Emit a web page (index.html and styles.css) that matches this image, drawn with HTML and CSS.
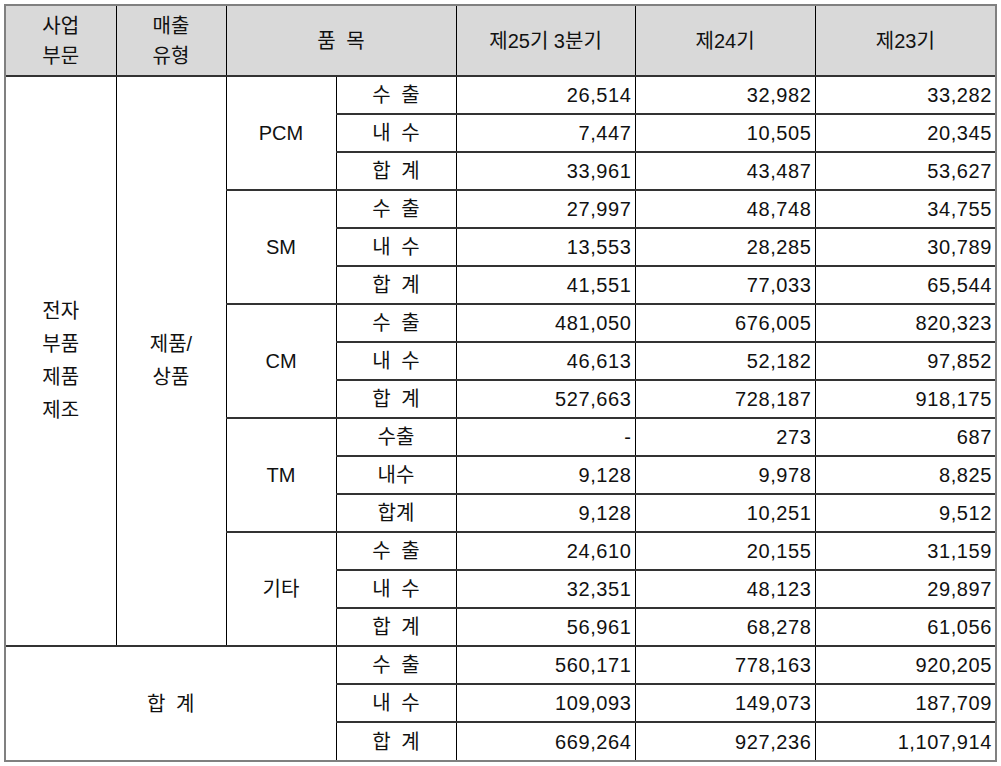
FILE: index.html
```html
<!DOCTYPE html>
<html lang="ko">
<head>
<meta charset="utf-8">
<link rel="stylesheet" href="styles.css">
</head>
<body>
<div class="frame">
<table class="sales">
<colgroup>
<col class="c1"><col class="c2"><col class="c3"><col class="c4"><col class="c5"><col class="c6"><col class="c7">
</colgroup>
<thead>
<tr class="head">
<th class="first">사업<br>부문</th>
<th>매출<br>유형</th>
<th colspan="2" class="sp">품 목</th>
<th>제25기 3분기</th>
<th>제24기</th>
<th>제23기</th>
</tr>
</thead>
<tbody>
<tr><td rowspan="15" class="first tall">전자<br>부품<br>제품<br>제조</td><td rowspan="15" class="tall">제품/<br>상품</td><td rowspan="3">PCM</td><td class="k">수 출</td><td class="n">26,514</td><td class="n">32,982</td><td class="n">33,282</td></tr>
<tr><td class="k">내 수</td><td class="n">7,447</td><td class="n">10,505</td><td class="n">20,345</td></tr>
<tr><td class="k">합 계</td><td class="n">33,961</td><td class="n">43,487</td><td class="n">53,627</td></tr>
<tr><td rowspan="3">SM</td><td class="k">수 출</td><td class="n">27,997</td><td class="n">48,748</td><td class="n">34,755</td></tr>
<tr><td class="k">내 수</td><td class="n">13,553</td><td class="n">28,285</td><td class="n">30,789</td></tr>
<tr><td class="k">합 계</td><td class="n">41,551</td><td class="n">77,033</td><td class="n">65,544</td></tr>
<tr><td rowspan="3">CM</td><td class="k">수 출</td><td class="n">481,050</td><td class="n">676,005</td><td class="n">820,323</td></tr>
<tr><td class="k">내 수</td><td class="n">46,613</td><td class="n">52,182</td><td class="n">97,852</td></tr>
<tr><td class="k">합 계</td><td class="n">527,663</td><td class="n">728,187</td><td class="n">918,175</td></tr>
<tr><td rowspan="3">TM</td><td class="k">수출</td><td class="n">-</td><td class="n">273</td><td class="n">687</td></tr>
<tr><td class="k">내수</td><td class="n">9,128</td><td class="n">9,978</td><td class="n">8,825</td></tr>
<tr><td class="k">합계</td><td class="n">9,128</td><td class="n">10,251</td><td class="n">9,512</td></tr>
<tr><td rowspan="3">기타</td><td class="k">수 출</td><td class="n">24,610</td><td class="n">20,155</td><td class="n">31,159</td></tr>
<tr><td class="k">내 수</td><td class="n">32,351</td><td class="n">48,123</td><td class="n">29,897</td></tr>
<tr><td class="k">합 계</td><td class="n">56,961</td><td class="n">68,278</td><td class="n">61,056</td></tr>
<tr><td rowspan="3" colspan="3" class="first last sp">합 계</td><td class="k">수 출</td><td class="n">560,171</td><td class="n">778,163</td><td class="n">920,205</td></tr>
<tr><td class="k">내 수</td><td class="n">109,093</td><td class="n">149,073</td><td class="n">187,709</td></tr>
<tr class="end"><td class="k">합 계</td><td class="n">669,264</td><td class="n">927,236</td><td class="n">1,107,914</td></tr>
</tbody>
</table>
</div>
</body>
</html>
```

FILE: styles.css
```css
html, body {
  margin: 0;
  padding: 0;
  background: #ffffff;
}
body {
  padding: 4px 0 0 4px;
  font-family: "Liberation Sans", "Noto Sans CJK KR", sans-serif;
  color: #111111;
}
.frame {
  display: inline-block;
  border: 2px solid #808080;
  line-height: 0;
}
.sales {
  border-collapse: collapse;
  table-layout: fixed;
  width: 989px;
  font-size: 20px;
  line-height: 24px;
}
.c1, .c2, .c3 { width: 110px; }
.c4 { width: 120px; }
.c5 { width: 179px; }
.c6 { width: 180px; }
.c7 { width: 180px; }

.sales th, .sales td {
  padding: 0 4px;
  text-align: center;
  vertical-align: middle;
  border-top: 2px solid #333333;
  border-bottom: 2px solid #333333;
  border-left: 1px solid #000000;
  border-right: 1px solid #000000;
  white-space: nowrap;
  overflow: hidden;
}
.sales th {
  font-weight: normal;
  background: #d9d9d9;
  border-top: none;
  line-height: 30px;
}
.head { height: 70px; }
.sales tbody tr { height: 38px; }
.sales tr > :last-child { border-right: none; }
.sales .first { border-left: none; }
.sales .last, .sales .end td { border-bottom: none; }
.sales .tall { line-height: 33px; }
.sales .k, .sales .sp { word-spacing: 5px; }
.sales .n {
  text-align: right;
  letter-spacing: 0.6px;
  padding-right: 3px;
}
```
